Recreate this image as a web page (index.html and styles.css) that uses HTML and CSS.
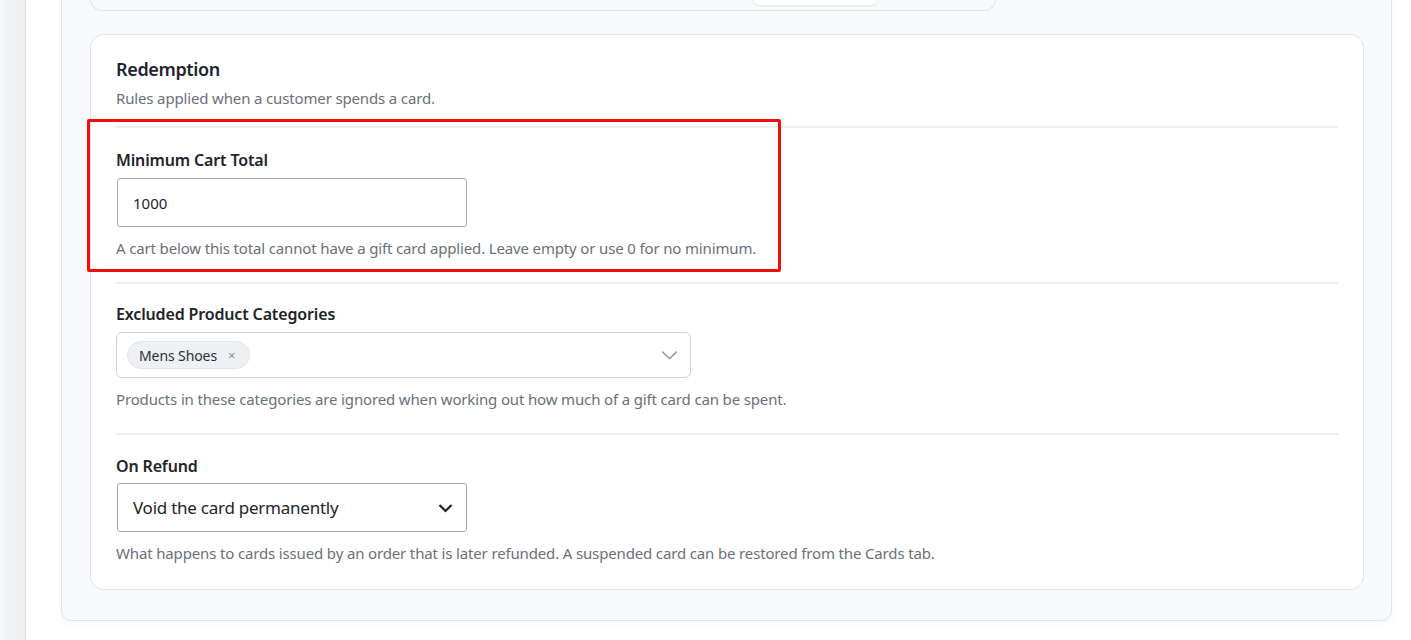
FILE: index.html
```html
<!DOCTYPE html>
<html lang="en">
<head>
<meta charset="utf-8">
<title>Redemption settings</title>
<link rel="stylesheet" href="styles.css">
</head>
<body>
<aside class="sidebar"></aside>
<main class="main">
  <div class="panel">
    <div class="top-card">
      <div class="top-row">
        <span class="top-button"></span>
      </div>
    </div>
    <section class="card">
      <header class="card-head">
        <h2 class="card-title">Redemption</h2>
        <p class="card-sub">Rules applied when a customer spends a card.</p>
      </header>
      <div class="field field-highlight">
        <span class="highlight"></span>
        <label class="label" for="min-total">Minimum Cart Total</label>
        <input id="min-total" class="text-input" type="text" value="1000">
        <p class="help">A cart below this total cannot have a gift card applied. Leave empty or use 0 for no minimum.</p>
      </div>
      <div class="field field-mid">
        <div class="label">Excluded Product Categories</div>
        <div class="multi">
          <span class="chip">Mens Shoes <span class="chip-x">×</span></span>
          <svg class="multi-chev" width="17" height="10" viewBox="0 0 17 10"><polyline points="1,1.5 8.5,8.5 16,1.5" fill="none" stroke="#8d9198" stroke-width="1.3"/></svg>
        </div>
        <p class="help">Products in these categories are ignored when working out how much of a gift card can be spent.</p>
      </div>
      <div class="field field-last">
        <div class="label">On Refund</div>
        <div class="select">
          <span class="select-text">Void the card permanently</span>
          <svg class="select-chev" width="15" height="10" viewBox="0 0 15 10"><polyline points="1.5,2 7.5,8 13.5,2" fill="none" stroke="#1d2327" stroke-width="2.2"/></svg>
        </div>
        <p class="help">What happens to cards issued by an order that is later refunded. A suspended card can be restored from the Cards tab.</p>
      </div>
    </section>
  </div>
</main>
</body>
</html>
```

FILE: styles.css
```css
* { box-sizing: border-box; }
html, body { margin: 0; padding: 0; }
body {
  display: flex;
  height: 640px;
  overflow: hidden;
  background: #ffffff;
  font-family: "Noto Sans", "Open Sans", sans-serif;
  color: #1d2327;
}
.sidebar {
  width: 26px;
  flex: none;
  background: linear-gradient(to right, #f7f8f9 0, #f1f2f4 6px, #eff0f2 100%);
  border-right: 1px solid #d9dbde;
}
.main {
  flex: 1;
  display: flex;
  flex-direction: column;
  justify-content: flex-end;
  height: 640px;
  overflow: hidden;
  padding: 0 19px 19px 35px;
}
.panel {
  background: #f8f9fb;
  border: 1px solid #e1e3e7;
  border-radius: 10px;
  padding: 0 27px 30px 28px;
  box-shadow: 0 3px 8px rgba(0,0,0,0.035);
}
.top-card {
  width: 906px;
  height: 60px;
  border: 1px solid #dfe2e6;
  border-top: none;
  border-radius: 0 0 12px 12px;
  background: #f8f9fb;
  display: flex;
  flex-direction: column;
  justify-content: flex-end;
  padding-bottom: 5px;
  margin-bottom: 23px;
}
.top-row {
  display: flex;
  padding-left: 662px;
}
.top-button {
  width: 124px;
  height: 30px;
  background: #ffffff;
  border-radius: 6px;
  box-shadow: 0 1px 2px rgba(0,0,0,0.08);
}
.card {
  background: #ffffff;
  border: 1px solid #e0e3e7;
  border-radius: 14px;
  padding: 0 25px;
}
.card-head {
  padding-top: 22px;
  padding-bottom: 17px;
}
.card-title {
  margin: 0;
  font-size: 18px;
  line-height: 24px;
  font-weight: 600;
  letter-spacing: -0.35px;
  color: #1d2430;
}
.card-sub {
  margin: 6px 0 0;
  font-size: 15px;
  line-height: 22px;
  letter-spacing: -0.15px;
  color: #6b7079;
}
.field {
  border-top: 2px solid #eceef1;
  padding: 21px 0 23px;
}
.field-mid { padding-top: 19px; }
.field-last { padding: 20px 0 25px; }
.field-highlight { position: relative; }
.highlight {
  position: absolute;
  left: -29px;
  top: -9px;
  width: 694px;
  height: 153px;
  border: 3px solid #f20d0d;
  border-radius: 2px;
  pointer-events: none;
}
.label {
  display: block;
  font-size: 16px;
  line-height: 22px;
  font-weight: 600;
  letter-spacing: -0.15px;
  color: #1d2327;
  margin-bottom: 7px;
}
.field-last .label { margin-bottom: 6px; }
.text-input {
  display: block;
  width: 350px;
  height: 49px;
  margin: 0 0 0 1px;
  border: 1px solid #a7aab0;
  border-radius: 3px;
  padding: 0 15px;
  font-family: "Noto Sans", "Open Sans", sans-serif;
  font-size: 15px;
  color: #1d2327;
  background: #ffffff;
}
.help {
  margin: 10px 0 0;
  font-size: 15px;
  line-height: 22px;
  letter-spacing: -0.15px;
  color: #6b7079;
}
.multi {
  width: 575px;
  height: 46px;
  border: 1px solid #cdd1d6;
  border-radius: 6px;
  display: flex;
  align-items: center;
  padding: 0 12px 0 10px;
  background: #ffffff;
}
.chip {
  display: inline-flex;
  align-items: center;
  height: 28px;
  padding: 0 14px 0 11px;
  border: 1px solid #e3e5e9;
  background: #eef0f3;
  border-radius: 14px;
  font-size: 14px;
  letter-spacing: -0.1px;
  color: #2a2f36;
}
.chip-x {
  margin-left: 11px;
  font-size: 13px;
  color: #8a8e95;
}
.multi-chev { margin-left: auto; }
.select {
  width: 350px;
  height: 49px;
  margin-left: 1px;
  border: 1px solid #a3a7ac;
  border-radius: 3px;
  display: flex;
  align-items: center;
  padding: 0 13px 0 15px;
  background: #ffffff;
}
.select-text {
  font-size: 17px;
  letter-spacing: -0.25px;
  color: #1d2327;
}
.select-chev { margin-left: auto; }
```
